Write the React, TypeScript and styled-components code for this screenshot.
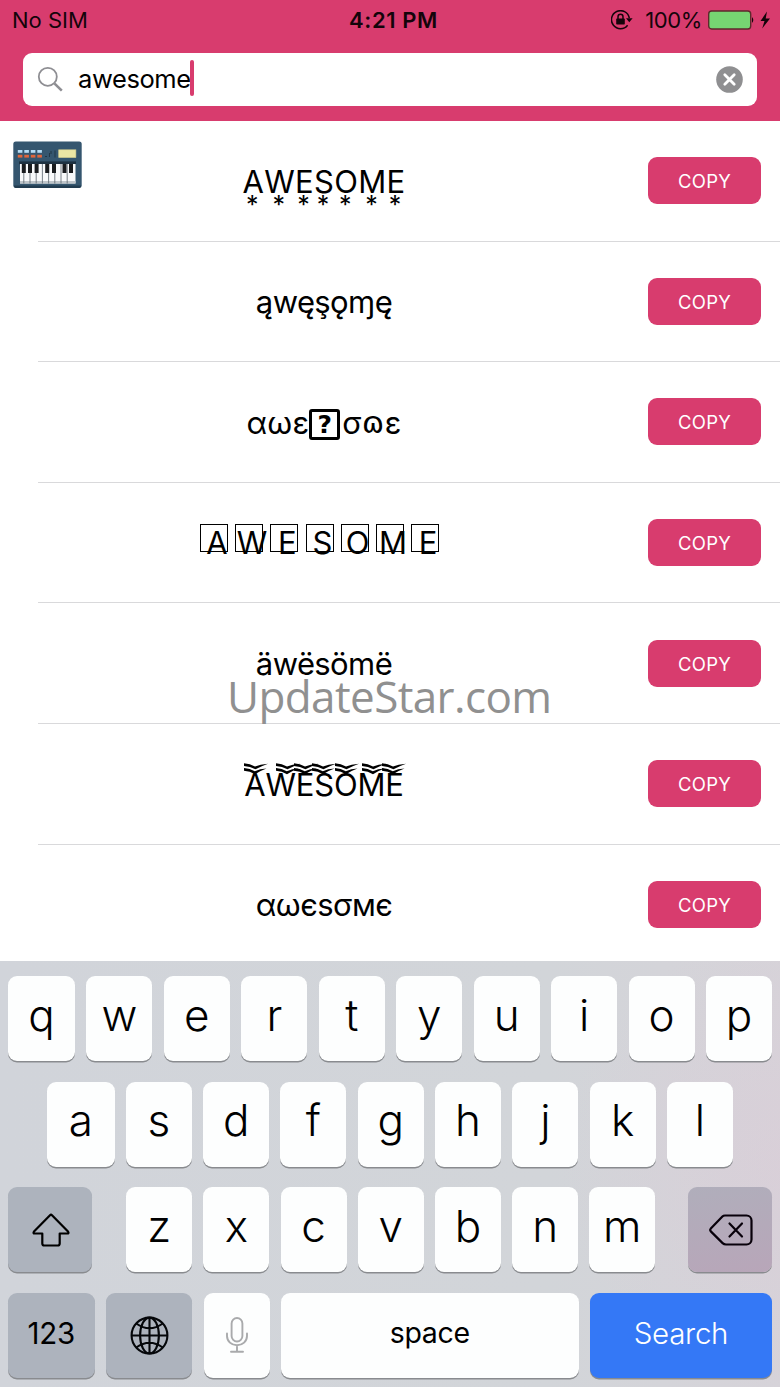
import React from "react";
import styled, { createGlobalStyle } from "styled-components";

const PINK = "#d83c6e";

const GlobalStyle = createGlobalStyle`
  * {
    box-sizing: border-box;
  }
  body {
    margin: 0;
    background: #fff;
    font-family: Inter, "Liberation Sans", sans-serif;
    color: #000;
  }
`;

const Screen = styled.div`
  position: relative;
  width: 780px;
  height: 1387px;
  overflow: hidden;
  display: flex;
  flex-direction: column;
`;

const Header = styled.header`
  height: 121px;
  flex: none;
  background: ${PINK};
`;

const StatusBar = styled.div`
  height: 53px;
  padding: 0 9px 13px 12px;
  display: grid;
  grid-template-columns: 1fr auto 1fr;
  align-items: center;
  font-size: 22px;
  color: #14040a;
`;

const Carrier = styled.span`
  letter-spacing: 0;
`;

const Clock = styled.span`
  font-weight: 600;
  letter-spacing: 0.6px;
  margin-left: 4px;
`;

const StatusRight = styled.div`
  display: flex;
  justify-content: flex-end;
  align-items: center;
`;

const Percent = styled.span`
  margin: 0 6px 0 12px;
  letter-spacing: -0.4px;
`;

const SearchField = styled.div`
  height: 53px;
  margin: 0 23px;
  padding: 0 14.5px 0 14px;
  border-radius: 9px;
  background: #fff;
  display: flex;
  align-items: center;
`;

const Query = styled.span`
  margin-left: 14px;
  font-size: 25.5px;
  letter-spacing: -0.4px;
  line-height: 50px;
  padding-bottom: 2px;
`;

const Caret = styled.i`
  width: 4px;
  height: 36px;
  margin: 0 0 3px -1px;
  border-radius: 2px;
  background: ${PINK};
`;

const ClearSlot = styled.span`
  margin-left: auto;
  display: flex;
`;

const List = styled.main`
  height: 840px;
  flex: none;
  overflow: hidden;
`;

const Row = styled.div`
  position: relative;
  height: 120.6px;
  margin-left: 38px;
  padding-right: 19px;
  border-bottom: 1px solid #d9d9db;
  display: flex;
  align-items: center;
`;

const Thumb = styled.div`
  position: absolute;
  left: -25px;
  top: 20px;
  line-height: 0;
`;

const Result = styled.div<{ spacing?: number }>`
  flex: 1;
  padding: 1px 38px 0 0;
  display: flex;
  justify-content: center;
  align-items: center;
  white-space: nowrap;
  font-size: 31px;
  letter-spacing: ${(props) => props.spacing ?? 0}px;
`;

const CopyButton = styled.button`
  width: 113px;
  height: 47px;
  border: 0;
  border-radius: 9px;
  background: ${PINK};
  color: #fff;
  font: 400 18.5px Inter, sans-serif;
  letter-spacing: 0.2px;
  padding: 1px 0 0;
`;

const Letter = styled.span`
  position: relative;
`;

const Star = styled.span`
  position: absolute;
  left: -1px;
  right: 1px;
  top: 30px;
  text-align: center;
  font-size: 25px;
  line-height: 1;
  letter-spacing: 0;
`;

const Wave = styled.svg<{ $shift: number }>`
  position: absolute;
  left: calc(50% - 14px + ${(props) => props.$shift}px);
  top: -3px;
`;

const Missing = styled.span`
  width: 31px;
  height: 31px;
  border: 3px solid #000;
  border-radius: 3px;
  display: flex;
  justify-content: center;
  align-items: center;
  font: 700 25px "DejaVu Sans", sans-serif;
  letter-spacing: 0;
  margin: 5px 2px 0 0;
`;

const ClosedOmega = styled.span`
  font: 31px/1 "DejaVu Sans", sans-serif;
`;

const Tiles = styled.div`
  display: flex;
  gap: 7.2px;
  margin: 0 9px 11px 0;
`;

const Tile = styled.span`
  width: 28px;
  height: 28px;
  border: 1.5px solid #000;
  padding-left: 6px;
  display: flex;
  justify-content: center;
  line-height: 35px;
`;

const Keyboard = styled.footer`
  flex: 1;
  padding: 15px 8px 0;
  background:
    radial-gradient(circle at 790px 200px, rgba(222, 200, 215, 0.35), rgba(222, 200, 215, 0) 230px),
    linear-gradient(90deg, #d1d4da, #d2d5d9 70%, #d6d3d9);
  display: flex;
  flex-direction: column;
  gap: 20.6px;
`;

const KeyRow = styled.div<{ inset?: number }>`
  height: 85px;
  padding: 0 ${(props) => props.inset ?? 0}px;
  display: flex;
  justify-content: space-between;
`;

const KeyGroup = styled.div`
  display: flex;
  gap: 11.2px;
  padding-left: 1.5px;
`;

const Key = styled.div<{ w?: number; tone?: string; size?: number }>`
  width: ${(props) => props.w ?? 66}px;
  height: 85px;
  border-radius: 9px;
  background: ${(props) => props.tone ?? "#fdfefe"};
  box-shadow: 0 1.5px 0 #898b8f;
  color: ${(props) => (props.tone === "#3478f6" ? "#fff" : "#000")};
  display: flex;
  justify-content: center;
  align-items: center;
  padding-bottom: ${(props) => (props.size ? 5 : 8)}px;
  font-size: ${(props) => props.size ?? 44}px;
  font-weight: ${(props) => (props.tone === "#3478f6" || !props.size ? 350 : 400)};
  letter-spacing: ${(props) => (props.size ? -0.3 : 0)}px;
`;

const IconKey = styled(Key)`
  padding: 0 0 0 1px;
`;

const Watermark = styled.div`
  position: absolute;
  left: 227px;
  top: 666px;
  font: 400 44px/60px "Open Sans", sans-serif;
  letter-spacing: -0.6px;
  color: #909090;
  white-space: nowrap;
`;

function RotationLock() {
  return (
    <svg width="22" height="20" viewBox="0 0 22 20" fill="none" stroke="#14040a" strokeWidth="1.5">
      <path d="M18.3 8A9 9 0 1 0 16.6 15.2" />
      <path d="M15 8.2h6.6l-3.3 4z" fill="#14040a" stroke="none" />
      <rect x="5.2" y="8.6" width="8.6" height="6" rx="0.8" fill="#14040a" stroke="none" />
      <path d="M7 9V6.8a2.5 2.5 0 0 1 5 0V9" />
    </svg>
  );
}

function Battery() {
  return (
    <svg width="63" height="20" viewBox="0 0 63 20">
      <rect x="0.7" y="1" width="42" height="18" rx="3" fill="#76d672" stroke="#5c2a2c" strokeWidth="1.4" />
      <path d="M44 7q2.6 3 0 6z" fill="#14040a" />
      <path d="M59 1.5L52.5 11h4l-2.3 7.5L62 8.6h-4.3z" fill="#14040a" />
    </svg>
  );
}

function SearchIcon() {
  return (
    <svg width="27" height="27" viewBox="0 0 27 27" fill="none" stroke="#8e8e93">
      <circle cx="10.8" cy="10.8" r="9" strokeWidth="1.8" />
      <path d="M17.6 17.6l7.2 7" strokeWidth="2.6" />
    </svg>
  );
}

function ClearIcon() {
  return (
    <svg width="27" height="27" viewBox="0 0 27 27">
      <circle cx="13.5" cy="13.5" r="13.3" fill="#8f8f91" />
      <path d="M8.8 8.8l9.4 9.4M18.2 8.8l-9.4 9.4" stroke="#fff" strokeWidth="2.8" strokeLinecap="round" />
    </svg>
  );
}

function Piano() {
  const blacks = [8.8, 15, 21.6, 32.2, 39, 49.5, 56];
  return (
    <svg width="69" height="48" viewBox="0 0 69 48">
      <rect x="0.3" y="0.5" width="68.4" height="46.2" rx="2.5" fill="#35566f" />
      <path d="M1 44.5h67v1a2 2 0 0 1-2 1.5H3a2 2 0 0 1-2-1.5z" fill="#223c50" />
      {[0, 1, 2, 3].map((i) => (
        <g key={i}>
          <rect x={4.8 + i * 6.5} y="9" width="4.6" height="2.8" fill="#b4dcf5" />
          <rect x={4.8 + i * 6.5} y="13.8" width="4.6" height="2.8" fill="#e0663c" />
        </g>
      ))}
      <path d="M32 15.5h2M36.5 12v4M38 10v3M42 9.5v7" stroke="#203647" />
      <rect x="45.7" y="8.8" width="17.2" height="7.8" fill="#ebe6a4" stroke="#cfca8d" strokeWidth="0.6" />
      <rect x="6" y="20.4" width="57" height="2.8" fill="#1d3141" />
      <rect x="7" y="23" width="55.5" height="19.5" fill="#f8f9fa" />
      <rect x="7" y="40" width="55.5" height="2.5" fill="#bfc5ca" />
      {[1, 2, 3, 4, 5, 6, 7, 8].map((i) => (
        <path key={i} d={`M${4.6 + i * 6.2} 23v19.5`} stroke="#59636b" strokeWidth="0.8" />
      ))}
      {blacks.map((x) => (
        <rect key={x} x={x} y="23" width="4" height="9" fill="#191b1e" />
      ))}
    </svg>
  );
}

function ShiftIcon() {
  return (
    <svg width="38" height="34" viewBox="0 0 38 34" fill="none" stroke="#000" strokeWidth="2.2" strokeLinejoin="round">
      <path d="M18 2.2q1-1 2 0l16 16.3q1.3 2-.8 2h-7.5v10q0 2-2 2H12.3q-2 0-2-2v-10H2.8q-2.1 0-.8-2z" />
    </svg>
  );
}

function DeleteIcon() {
  return (
    <svg width="44" height="32" viewBox="0 0 44 32" fill="none" stroke="#08000a" strokeWidth="2.2" strokeLinejoin="round">
      <path d="M16 1.5h21.5a5 5 0 0 1 5 5v19a5 5 0 0 1-5 5H17q-2 0-3.4-1.4L1.8 17.4q-1.2-1.4 0-2.8L13.4 2.5q1-1 2.6-1z" />
      <path d="M20.5 9.5l12.5 13M33 9.5l-12.5 13" strokeLinecap="round" />
    </svg>
  );
}

function GlobeIcon() {
  return (
    <svg width="39" height="39" viewBox="0 0 39 39" fill="none" stroke="#05070a" strokeWidth="2.1">
      <circle cx="19.5" cy="19.5" r="17.9" />
      <ellipse cx="19.5" cy="19.5" rx="9.4" ry="17.9" />
      <path d="M19.5 1.6v35.8M1.6 19.5h35.8M6.3 7.5q13.2 9.6 26.4 0M6.3 31.5q13.2-9.6 26.4 0" />
    </svg>
  );
}

function MicIcon() {
  return (
    <svg width="22" height="36" viewBox="0 0 22 36" fill="none" stroke="#a9aaac" strokeWidth="1.9" strokeLinecap="round">
      <rect x="5.6" y="1" width="10.8" height="23.5" rx="5.4" />
      <path d="M1 16.5v2.5a10 9.3 0 0 0 20 0v-2.5M11 28.5v6M5 34.7h12" />
    </svg>
  );
}

const word = "AWESOME".split("");
const waveShifts = [3, 9, 3, 2, 3, 5, 1];

const results = [
  {
    spacing: 0.3,
    body: word.map((c, i) => (
      <Letter key={i}>
        {c}
        <Star>*</Star>
      </Letter>
    )),
  },
  { spacing: -0.6, body: "ąwęşǫɱę" },
  {
    spacing: 0.2,
    body: (
      <>
        αωε<Missing>?</Missing>σ<ClosedOmega>ɷ</ClosedOmega>ε
      </>
    ),
  },
  {
    body: (
      <Tiles>
        {word.map((c, i) => (
          <Tile key={i}>{c}</Tile>
        ))}
      </Tiles>
    ),
  },
  { spacing: -0.6, body: "äwësömë" },
  {
    spacing: -0.2,
    body: word.map((c, i) => (
      <Letter key={i}>
        {c}
        <Wave $shift={waveShifts[i]} width="25" height="12" viewBox="0 0 25 12">
          <path
            d="M0 .2Q6 .6 11 3.4Q16 1.4 24 .8Q17 3.4 11.5 6.2Q6 3.4 0 3zM0 5Q6 5.2 10.8 8.2Q16 6 22.5 5.6Q16 8 11 11.2Q6 8.2 0 7.8z"
            fill="#000"
          />
        </Wave>
      </Letter>
    )),
  },
  { spacing: -0.5, body: "αωєѕσмє" },
];

export default function App() {
  return (
    <Screen>
      <GlobalStyle />
      <Header>
        <StatusBar>
          <Carrier>No SIM</Carrier>
          <Clock>4:21 PM</Clock>
          <StatusRight>
            <RotationLock />
            <Percent>100%</Percent>
            <Battery />
          </StatusRight>
        </StatusBar>
        <SearchField>
          <SearchIcon />
          <Query>awesome</Query>
          <Caret />
          <ClearSlot>
            <ClearIcon />
          </ClearSlot>
        </SearchField>
      </Header>
      <List>
        {results.map((item, index) => (
          <Row key={index}>
            {index === 0 && (
              <Thumb>
                <Piano />
              </Thumb>
            )}
            <Result spacing={item.spacing}>{item.body}</Result>
            <CopyButton>COPY</CopyButton>
          </Row>
        ))}
      </List>
      <Keyboard>
        <KeyRow>
          {"qwertyuiop".split("").map((c, i) => (
            <Key key={c} w={i === 0 ? 67 : 66}>
              {c}
            </Key>
          ))}
        </KeyRow>
        <KeyRow inset={39}>
          {"asdfghjkl".split("").map((c, i) => (
            <Key key={c} w={i === 0 ? 67.5 : 66}>
              {c}
            </Key>
          ))}
        </KeyRow>
        <KeyRow>
          <IconKey w={84} tone="#adb3bd">
            <ShiftIcon />
          </IconKey>
          <KeyGroup>
            {"zxcvbnm".split("").map((c) => (
              <Key key={c}>{c}</Key>
            ))}
          </KeyGroup>
          <IconKey w={84} tone="linear-gradient(170deg, #b0aebb, #b8a6b9)">
            <DeleteIcon />
          </IconKey>
        </KeyRow>
        <KeyRow>
          <Key w={86.5} tone="#adb3bd" size={29.5}>
            123
          </Key>
          <IconKey w={86.5} tone="#adb3bd">
            <GlobeIcon />
          </IconKey>
          <IconKey>
            <MicIcon />
          </IconKey>
          <Key w={298} size={28.5}>
            space
          </Key>
          <Key w={182} tone="#3478f6" size={29.5}>
            Search
          </Key>
        </KeyRow>
      </Keyboard>
      <Watermark>UpdateStar.com</Watermark>
    </Screen>
  );
}
